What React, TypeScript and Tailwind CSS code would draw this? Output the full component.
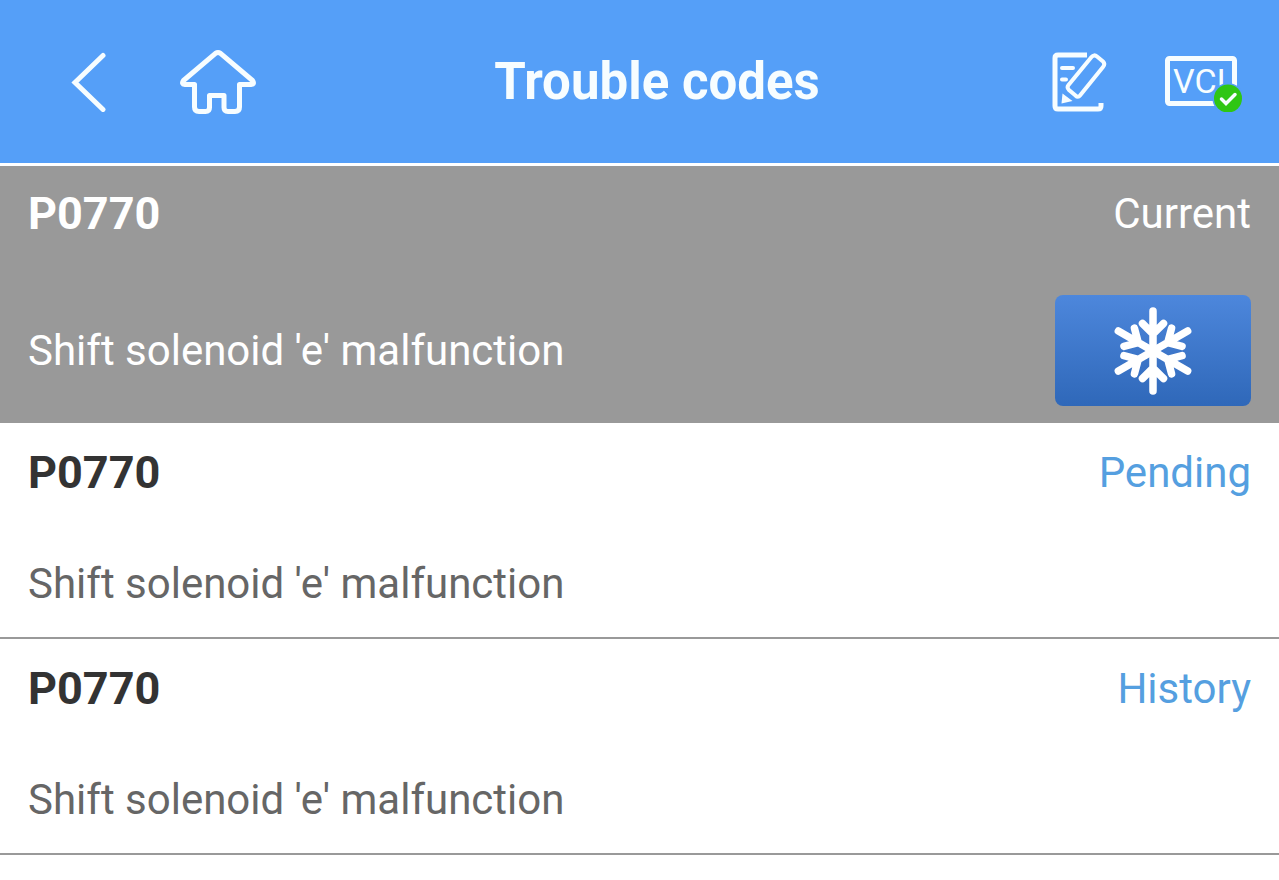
import clsx from "clsx";

type TroubleCode = {
  id: number;
  code: string;
  status: string;
  description: string;
  freezeFrame: boolean;
};

const troubleCodes: TroubleCode[] = [
  { id: 1, code: "P0770", status: "Current", description: "Shift solenoid 'e' malfunction", freezeFrame: true },
  { id: 2, code: "P0770", status: "Pending", description: "Shift solenoid 'e' malfunction", freezeFrame: false },
  { id: 3, code: "P0770", status: "History", description: "Shift solenoid 'e' malfunction", freezeFrame: false },
];

function BackIcon() {
  return (
    <svg className="w-[36px] h-[60px]" viewBox="0 0 36 60" fill="none" stroke="currentColor" strokeWidth={5} strokeLinecap="round">
      <path d="M32 3.5L4 30.5L32 57.5" />
    </svg>
  );
}

function HomeIcon() {
  return (
    <svg className="w-[76px] h-[64px]" viewBox="0 0 76 64" fill="none" stroke="currentColor" strokeWidth={5} strokeLinejoin="round">
      <path d="M35.5 3.4Q38 1.7 40.5 3.4L72.5 30.5Q75 34 71 34.5H59.5V57Q59.5 61.5 55 61.5H48Q44 61.5 44 57.5V45.500H29.500V57.5Q29.500 61.500 25.500 61.500H19Q14.500 61.500 14.500 57V34.500H5Q1 34 3.500 30.500Z" />
    </svg>
  );
}

function NoteIcon() {
  return (
    <svg className="w-[56px] h-[60px]" viewBox="0 0 56 60" fill="none" stroke="currentColor" strokeWidth={5}>
      <path d="M35 3H6Q3 3 3 6V54Q3 57 6 57H46Q49 57 49 54V51" />
      <path d="M10 16H21M10 27.500H14" strokeWidth={4} strokeLinecap="round" />
      <path d="M39.500 5Q42 2 45 4.500L51 9.500Q53.500 12 51 15L28 43.500Q26 46 23.500 43.500L17 38Q14.500 35.500 16.500 33Z" strokeWidth={4} />
      <path d="M10.500 41.500L20.500 49L9.500 51.500Z" fill="currentColor" stroke="none" />
    </svg>
  );
}

function VciIcon() {
  return (
    <svg className="w-[78px] h-[60px]" viewBox="0 0 78 60" fill="none">
      <rect x="2.500" y="6.500" width="67" height="45" rx="2" stroke="currentColor" strokeWidth={5} />
      <text x="8" y="41" fill="currentColor" fontFamily="Roboto, sans-serif" fontSize="34">
        VCI
      </text>
      <circle cx="63" cy="46.500" r="15.500" fill="#559ff8" />
      <circle cx="63" cy="46.500" r="14" fill="#2fc614" />
      <path d="M56.500 47L61 51.500L70 42.500" stroke="currentColor" strokeWidth={3.500} strokeLinecap="round" />
    </svg>
  );
}

function SnowflakeIcon() {
  return (
    <svg className="w-[80px] h-[88px]" viewBox="-40 -44 80 88" fill="none" stroke="currentColor" strokeWidth={7.500} strokeLinecap="round">
      {[0, 60, 120, 180, 240, 300].map((angle) => (
        <path key={angle} transform={`rotate(${angle})`} d="M0 0V-40M-10.500 -27.500L0 -17L10.500 -27.500" />
      ))}
    </svg>
  );
}

function CodeRow({ item }: { item: TroubleCode }) {
  return (
    <li
      className={clsx(
        "px-[28px]",
        item.freezeFrame
          ? "bg-[#999999] text-white pt-[22px] pb-[17px]"
          : "border-b-2 border-[#999999] pt-[24px] pb-[28px]"
      )}
    >
      <div className="flex items-center justify-between">
        <h2 className={clsx("text-[45px] leading-[52px] font-bold", !item.freezeFrame && "text-[#333333]")}>
          {item.code}
        </h2>
        <span className={clsx("text-[42px] leading-[52px]", !item.freezeFrame && "text-[#559fe0]")}>
          {item.status}
        </span>
      </div>
      <div className={clsx("flex items-center justify-between", item.freezeFrame ? "mt-[55px]" : "mt-[60px]")}>
        <p className={clsx("text-[42px] leading-[50px]", !item.freezeFrame && "text-[#666666]")}>
          {item.description}
        </p>
        {item.freezeFrame && (
          <button
            type="button"
            aria-label="Freeze frame"
            className="flex items-center justify-center w-[196px] h-[111px] rounded-lg bg-linear-to-b from-[#4d87dc] to-[#2f68b9] text-white"
          >
            <SnowflakeIcon />
          </button>
        )}
      </div>
    </li>
  );
}

export default function App() {
  return (
    <div className="min-h-screen bg-white font-['Roboto',sans-serif]">
      {/* Top bar */}
      <header className="grid grid-cols-[1fr_auto_1fr] items-center h-[166px] border-b-3 border-white bg-[#559ff8] pl-[71px] pr-[36px] text-[#f7fdff]">
        <div className="flex items-center gap-[73px]">
          <button type="button" aria-label="Back">
            <BackIcon />
          </button>
          <button type="button" aria-label="Home">
            <HomeIcon />
          </button>
        </div>
        <h1 className="text-[51px] leading-[60px] font-bold">Trouble codes</h1>
        <div className="flex items-center justify-end gap-[57px]">
          <button type="button" aria-label="Notes">
            <NoteIcon />
          </button>
          <button type="button" aria-label="VCI connection">
            <VciIcon />
          </button>
        </div>
      </header>

      {/* Code list */}
      <ul>
        {troubleCodes.map((item) => (
          <CodeRow key={item.id} item={item} />
        ))}
      </ul>
    </div>
  );
}
